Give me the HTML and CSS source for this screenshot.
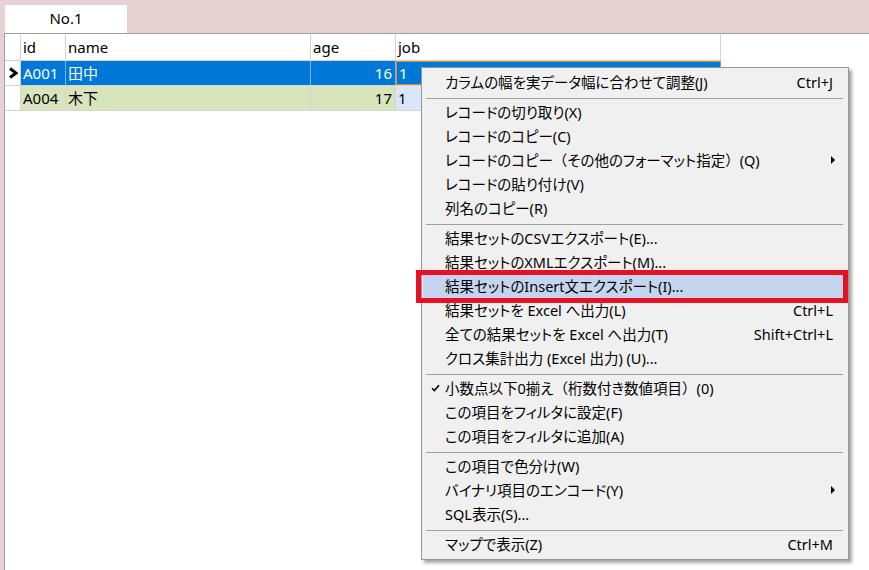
FILE: index.html
```html
<!DOCTYPE html>
<html lang="ja">
<head>
    <meta charset="UTF-8">
    <title>No.1</title>
    <link rel="stylesheet" href="styles.css">
</head>
<body>
    <div class="tabbar">
        <div class="tab">No.1</div>
    </div>

    <div class="panel">
        <div class="grid">
            <div class="row head">
                <div class="cell rh"></div>
                <div class="cell">id</div>
                <div class="cell">name</div>
                <div class="cell">age</div>
                <div class="cell">job</div>
            </div>
            <div class="row sel">
                <div class="cell rh">
                    <svg width="10" height="12" viewBox="0 0 10 12"><path d="M2 1.5 L8 6 L2 10.5" fill="none" stroke="#000" stroke-width="3"/></svg>
                </div>
                <div class="cell">A001</div>
                <div class="cell">田中</div>
                <div class="cell num">16</div>
                <div class="cell job current">1</div>
            </div>
            <div class="row alt">
                <div class="cell rh"></div>
                <div class="cell">A004</div>
                <div class="cell">木下</div>
                <div class="cell num">17</div>
                <div class="cell job">1</div>
            </div>
        </div>
    </div>

    <!-- コンテキストメニュー -->
    <div class="menu">
        <div class="item"><span>カラムの幅を実データ幅に合わせて調整(J)</span><span class="key">Ctrl+J</span></div>
        <div class="sep"></div>
        <div class="item"><span>レコードの切り取り(X)</span></div>
        <div class="item"><span>レコードのコピー(C)</span></div>
        <div class="item sub"><span>レコードのコピー<span class="fw">（</span>その他のフォーマット指定<span class="fw">）</span>(Q)</span></div>
        <div class="item"><span>レコードの貼り付け(V)</span></div>
        <div class="item"><span>列名のコピー(R)</span></div>
        <div class="sep"></div>
        <div class="item"><span>結果セットのCSVエクスポート(E)...</span></div>
        <div class="item"><span>結果セットのXMLエクスポート(M)...</span></div>
        <div class="item hot"><span>結果セットのInsert文エクスポート(I)...</span></div>
        <div class="item"><span>結果セットを Excel へ出力(L)</span><span class="key">Ctrl+L</span></div>
        <div class="item"><span>全ての結果セットを Excel へ出力(T)</span><span class="key">Shift+Ctrl+L</span></div>
        <div class="item"><span>クロス集計出力 (Excel 出力) (U)...</span></div>
        <div class="sep"></div>
        <div class="item checked">
            <svg class="check" width="9" height="8" viewBox="0 0 9 8"><path d="M1 4.2 L3.4 6.6 L8 1.2" fill="none" stroke="#000" stroke-width="1.6"/></svg>
            <span>小数点以下0揃え<span class="fw">（</span>桁数付き数値項目<span class="fw">）</span>(0)</span>
        </div>
        <div class="item"><span>この項目をフィルタに設定(F)</span></div>
        <div class="item"><span>この項目をフィルタに追加(A)</span></div>
        <div class="sep"></div>
        <div class="item"><span>この項目で色分け(W)</span></div>
        <div class="item sub"><span>バイナリ項目のエンコード(Y)</span></div>
        <div class="item"><span>SQL表示(S)...</span></div>
        <div class="sep"></div>
        <div class="item"><span>マップで表示(Z)</span><span class="key">Ctrl+M</span></div>
    </div>
</body>
</html>
```

FILE: styles.css
```css
/* 全体 */
body {
    margin: 0;
    width: 869px;
    height: 570px;
    overflow: hidden;
    background-color: #e6d2d3;
    font-family: "Noto Sans", "Noto Sans CJK JP", sans-serif;
    color: #000;
}

/* タブ */
.tabbar {
    height: 33px;
    padding: 5px 0 0 5px;
    box-sizing: border-box;
}

.tab {
    width: 122px;
    height: 28px;
    line-height: 27px;
    background-color: #fff;
    text-align: center;
    font-size: 15px;
}

.panel {
    margin-left: 4px;
    height: 537px;
    background-color: #fff;
    border-top: 1px solid #a0a0a0;
    border-left: 1px solid #a0a0a0;
}

/* グリッド */
.grid {
    width: 716px;
}

.row {
    display: grid;
    grid-template-columns: 16px 45px 245px 85px 325px;
    height: 25px;
    border-bottom: 1px solid #d4d4d4;
    box-sizing: border-box;
}

.row.head {
    height: 27px;
}

.cell {
    border-right: 1px solid #d4d4d4;
    padding: 0 3px 0 2px;
    font-size: 15px;
    line-height: 24px;
    white-space: nowrap;
    overflow: hidden;
}

.row.head .cell {
    line-height: 27px;
}

.cell.rh {
    padding: 0;
    background-color: #fff;
    display: flex;
    align-items: center;
    justify-content: center;
}

.cell.num {
    text-align: right;
}

.row.sel .cell {
    background-color: #0078d7;
    color: #fff;
    border-right-color: #7fb6e6;
}

.row.sel .cell.rh {
    background-color: #fff;
    border-right-color: #d4d4d4;
}

.row.sel .cell.current {
    border: 1px solid #e8871e;
    line-height: 22px;
}

.row.alt .cell {
    background-color: #d8e4bc;
}

.row.alt .cell.rh {
    background-color: #fff;
}

.row.alt .cell.job {
    background-color: #dae6fb;
}

/* メニュー */
.menu {
    position: absolute;
    left: 421px;
    top: 67px;
    width: 428px;
    box-sizing: border-box;
    padding: 3px 2px 2px 1px;
    background-color: #f0f0f0;
    border: 1px solid #979797;
    box-shadow: 3px 3px 3px rgba(0, 0, 0, 0.35);
    font-size: 14.5px;
    font-feature-settings: "palt";
}

.item {
    position: relative;
    height: 24px;
    box-sizing: border-box;
    padding: 0 13px 3px 22px;
    display: flex;
    align-items: center;
    justify-content: space-between;
    white-space: nowrap;
}

.item .key,
.item .fw {
    font-feature-settings: normal;
}

.item.sub::after {
    content: '';
    position: absolute;
    right: 11px;
    top: 7px;
    border-left: 4px solid #000;
    border-top: 4px solid transparent;
    border-bottom: 4px solid transparent;
}

.item .check {
    position: absolute;
    left: 8px;
    top: 7px;
}

.item.hot {
    background-color: #c6d5ef;
}

/* 注釈の赤枠 */
.item.hot::before {
    content: '';
    position: absolute;
    left: -7px;
    right: -2px;
    top: -5px;
    bottom: -4px;
    border: 5px solid #e81123;
}

.sep {
    height: 6px;
    margin: 0 3px;
    position: relative;
}

.sep::after {
    content: '';
    position: absolute;
    left: 0;
    right: 0;
    top: 3px;
    border-top: 1px solid #a0a0a0;
}
```
